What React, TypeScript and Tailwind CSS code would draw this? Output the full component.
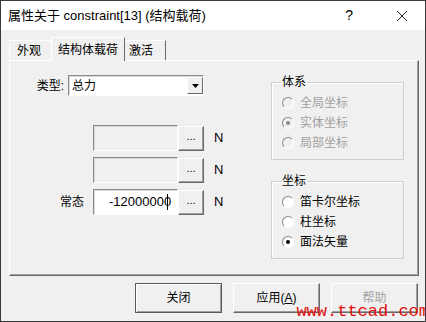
import React from "react";

const font = { fontFamily: '"Liberation Sans", "Noto Sans CJK SC", sans-serif' };

function Radio({ label, checked, disabled }: { label: string; checked?: boolean; disabled?: boolean }) {
  return (
    <div className="flex items-center h-[20px] pl-[10px]">
      <div
        className={`w-[12px] h-[12px] rounded-full border border-t-[#8a8a8a] border-l-[#8a8a8a] border-b-white border-r-white flex items-center justify-center ${
          disabled ? "bg-[#f0f0f0]" : "bg-white"
        }`}
      >
        {checked && <div className={`w-[4px] h-[4px] rounded-full ${disabled ? "bg-[#8a8a8a]" : "bg-black"}`} />}
      </div>
      <span className={`ml-[6px] text-[12px] ${disabled ? "text-[#a0a0a0]" : "text-black"}`}>{label}</span>
    </div>
  );
}

function Group({ title, children }: { title: string; children: React.ReactNode }) {
  return (
    <fieldset className="w-[133px] border border-[#cfcfcf] shadow-[inset_1px_1px_0_#ffffff] pt-[3px] pb-[6px]">
      <legend className="ml-[9px] px-[1px] text-[12px] leading-[16px] text-black">{title}</legend>
      {children}
    </fieldset>
  );
}

function DotsButton() {
  return (
    <div className="w-[26px] h-[25px] border border-t-white border-l-white border-b-[#696969] border-r-[#696969] shadow-[inset_-1px_-1px_0_#a0a0a0] flex items-center justify-center text-[11px] leading-none text-black pb-[3px]">
      ...
    </div>
  );
}

function ValueRow({ label, value }: { label?: string; value?: string }) {
  const enabled = value !== undefined;
  return (
    <div className="flex items-center">
      <div className="w-[74px] text-right text-[12px] text-black">{label}</div>
      <div
        className={`ml-[9px] w-[85px] h-[26px] border border-t-[#8a8a8a] border-l-[#8a8a8a] border-b-white border-r-white shadow-[inset_1px_1px_0_#d8d8d8] overflow-hidden flex items-center ${
          enabled ? "bg-white" : "bg-[#f0f0f0]"
        }`}
      >
        {enabled && (
          <span className="pl-[15px] text-[13px] text-black whitespace-nowrap flex items-center">
            {value}
            <span className="inline-block w-px h-[16px] bg-black -ml-[4px]" />
          </span>
        )}
      </div>
      <DotsButton />
      <div className="ml-[10px] text-[13px] text-black">N</div>
    </div>
  );
}

function Btn({ label, disabled, isDefault }: { label: React.ReactNode; disabled?: boolean; isDefault?: boolean }) {
  return (
    <div
      className={`w-[87px] h-[30px] flex items-center justify-center text-[12px] border ${
        isDefault
          ? "border-[#5a5a5a] shadow-[inset_1px_1px_0_#ffffff,inset_-1px_-1px_0_#a0a0a0]"
          : "border-t-white border-l-white border-b-[#696969] border-r-[#696969] shadow-[inset_-1px_-1px_0_#a0a0a0]"
      } ${disabled ? "text-[#a0a0a0]" : "text-black"}`}
    >
      {label}
    </div>
  );
}

export default function App() {
  return (
    <div style={font} className="w-[426px] h-[322px] border border-[#3a3a3a] bg-[#f0f0f0] flex flex-col relative overflow-hidden">
      {/* title bar */}
      <div className="h-[29px] bg-white flex items-center pl-[7px] text-[13px] text-black">
        <span>属性关于 constraint[13] (结构载荷)</span>
        <span className="ml-auto mr-[43px] text-[14px]">?</span>
        <svg width="12" height="12" viewBox="0 0 12 12" className="mr-[17px]">
          <path d="M1 1 L11 11 M11 1 L1 11" stroke="#222" strokeWidth="1" />
        </svg>
      </div>

      {/* tabs */}
      <div className="flex items-end h-[23px] mt-[7px] ml-[8px] text-[12px] text-black">
        <div className="h-[20px] w-[42px] flex items-center pl-[7px] border-t border-l border-white">外观</div>
        <div className="relative z-10 h-[24px] -mb-px bg-[#f0f0f0] w-[74px] flex items-center pl-[6px] border-t border-l border-white border-r border-r-[#696969]">
          结构体载荷
        </div>
        <div className="h-[20px] w-[41px] flex items-center pl-[4px] border-t border-white border-r border-r-[#696969]">激活</div>
      </div>

      {/* panel */}
      <div className="mx-[8px] w-[410px] h-[216px] border border-t-white border-l-white border-r-[#696969] border-b-[#696969] shadow-[inset_-1px_-1px_0_#a0a0a0] flex">
        <div className="w-[230px] flex flex-col">
          <div className="flex items-center mt-[14px]">
            <div className="w-[54px] text-right text-[12px] text-black">类型:</div>
            <div className="ml-[4px] w-[136px] h-[21px] bg-white border border-t-[#8a8a8a] border-l-[#8a8a8a] border-b-white border-r-white shadow-[inset_1px_1px_0_#d8d8d8] flex items-center">
              <span className="pl-[3px] text-[12px] text-black">总力</span>
              <div className="ml-auto w-[16px] h-[17px] bg-[#f0f0f0] border border-t-white border-l-white border-b-[#696969] border-r-[#696969] flex items-center justify-center">
                <svg width="7" height="4" viewBox="0 0 7 4">
                  <path d="M0 0 H7 L3.5 4 Z" fill="#000" />
                </svg>
              </div>
            </div>
          </div>
          <div className="mt-[29px] flex flex-col gap-[6px]">
            <ValueRow />
            <ValueRow />
            <ValueRow label="常态" value="-12000000" />
          </div>
        </div>
        <div className="ml-auto mr-[14px] mt-[13px] flex flex-col gap-[13px]">
          <Group title="体系">
            <Radio label="全局坐标" disabled />
            <Radio label="实体坐标" checked disabled />
            <Radio label="局部坐标" disabled />
          </Group>
          <Group title="坐标">
            <Radio label="笛卡尔坐标" />
            <Radio label="柱坐标" />
            <Radio label="面法矢量" checked />
          </Group>
        </div>
      </div>

      {/* buttons */}
      <div className="mt-[7px] flex justify-end gap-[11px] pr-[7px]">
        <Btn label="关闭" isDefault />
        <Btn label={<span>应用(<span className="underline">A</span>)</span>} />
        <Btn label="帮助" disabled />
      </div>

      {/* watermark */}
      <div
        style={{ fontFamily: '"Liberation Mono", monospace' }}
        className="absolute right-[-4px] bottom-[0px] text-[17px] leading-[18px] text-[#e01010]"
      >
        www.ttcad.com
      </div>
    </div>
  );
}
